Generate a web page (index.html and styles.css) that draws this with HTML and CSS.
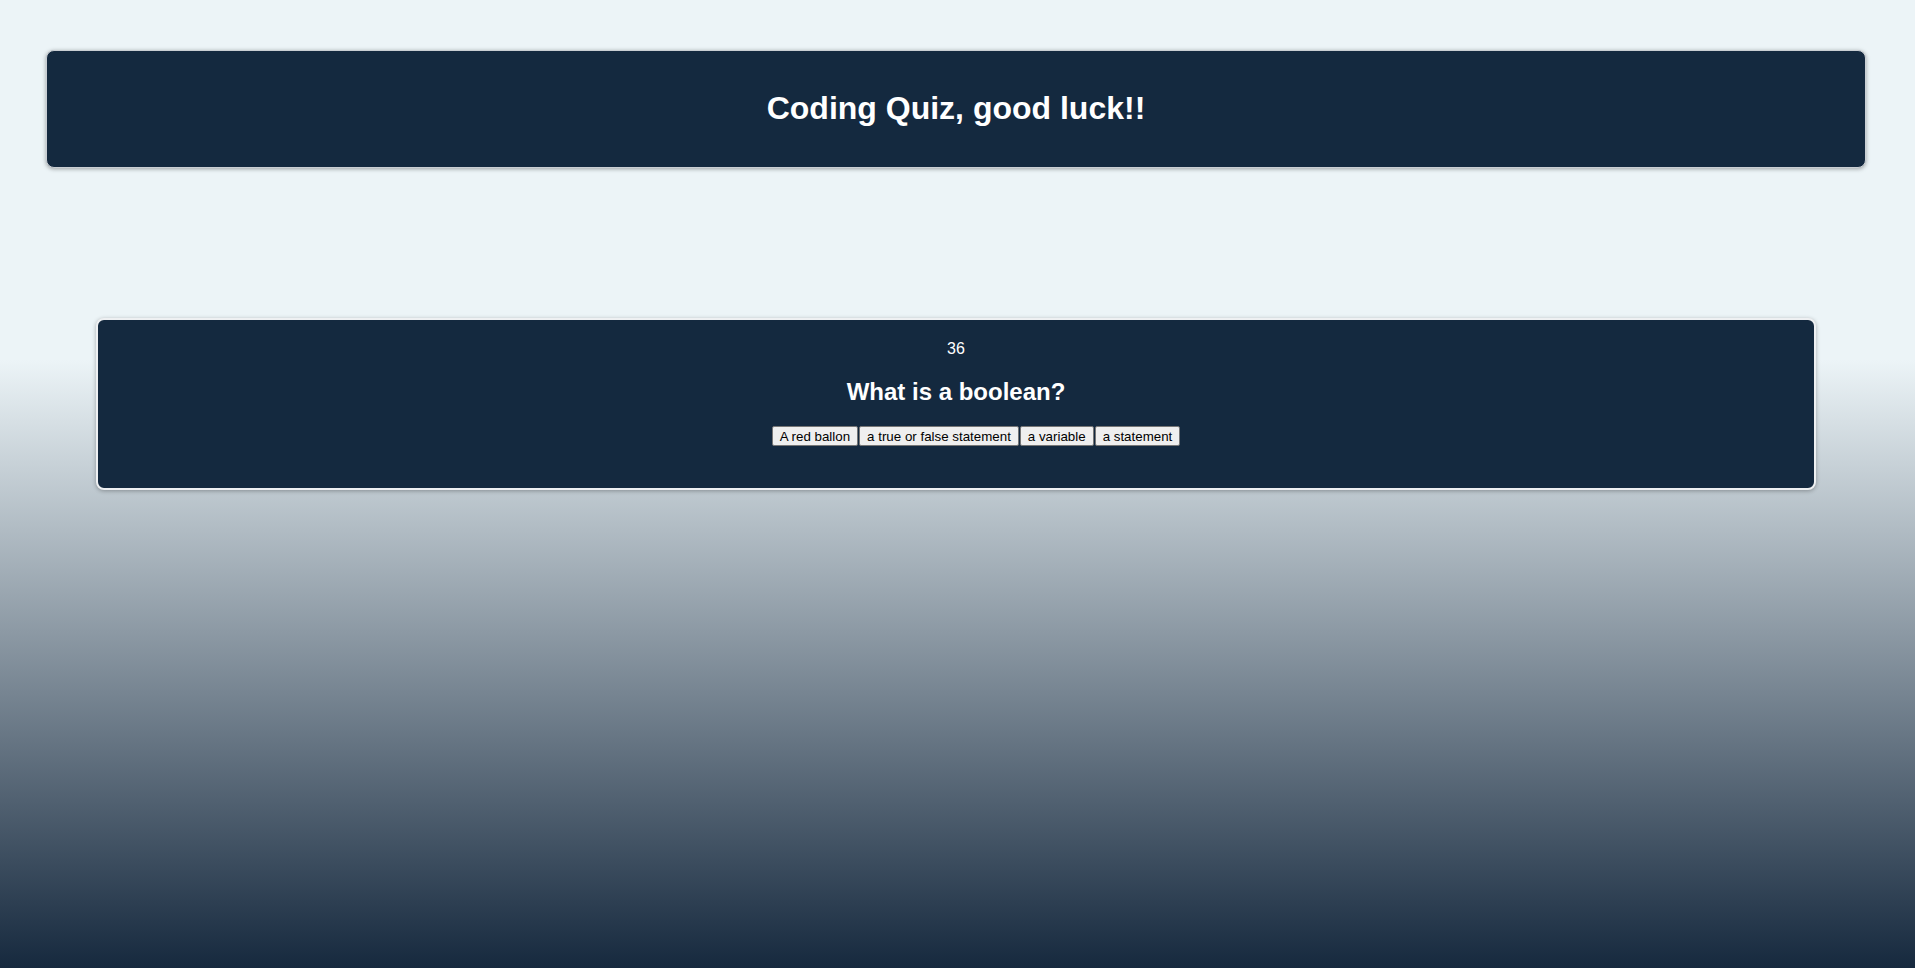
FILE: index.html
```html
<!DOCTYPE html>
<html lang="en">
<head>
<meta charset="utf-8">
<title>Coding Quiz</title>
<link rel="stylesheet" href="styles.css">
</head>
<body>
<header class="banner">
  <h1 class="banner-title">Coding Quiz, good luck!!</h1>
</header>
<main class="quiz">
  <p class="timer">36</p>
  <h2 class="question">What is a boolean?</h2>
  <ul class="answers">
    <li class="answer-item"><button class="answer">A red ballon</button></li>
    <li class="answer-item"><button class="answer">a true or false statement</button></li>
    <li class="answer-item"><button class="answer">a variable</button></li>
    <li class="answer-item"><button class="answer">a statement</button></li>
  </ul>
</main>
</body>
</html>
```

FILE: styles.css
```css
html, body {
  margin: 0;
  padding: 0;
}

body {
  min-height: 968px;
  font-family: "Liberation Sans", Arial, sans-serif;
  background: linear-gradient(180deg, #ecf4f7 0%, #ecf4f7 37.2%, #16293e 100%);
  background-attachment: fixed;
  overflow: hidden;
}

.banner {
  margin: 50px 49px 0 46px;
  padding: 39px 0 40px;
  background: #14293f;
  border: 1px solid #c9ced3;
  border-radius: 8px;
  box-shadow: 0 1px 4px rgba(0, 0, 0, 0.35);
  text-align: center;
}

.banner-title {
  margin: 0;
  color: #ffffff;
  font-size: 32px;
  font-weight: bold;
}

.quiz {
  margin: 150px 99px 0 96px;
  padding: 20px 0 42px;
  background: #14293f;
  border: 2px solid #eef0f2;
  border-radius: 8px;
  box-shadow: 0 1px 4px rgba(0, 0, 0, 0.3);
  text-align: center;
  color: #ffffff;
}

.timer {
  margin: 0;
  font-size: 16px;
}

.question {
  margin: 20px 0 20px;
  font-size: 24px;
  font-weight: bold;
}

.answers {
  display: flex;
  justify-content: center;
  list-style: none;
  margin: 0;
  padding: 0 0 0 40px;
}

.answer-item {
  margin: 0 0.5px;
}

.answer {
  font-family: "Liberation Sans", Arial, sans-serif;
  font-size: 13.333px;
  color: #000000;
  background: #efefef;
  border: 1px solid #767676;
  border-radius: 2px;
  padding: 2px 7px 1px;
  margin: 0;
  line-height: normal;
}
```
